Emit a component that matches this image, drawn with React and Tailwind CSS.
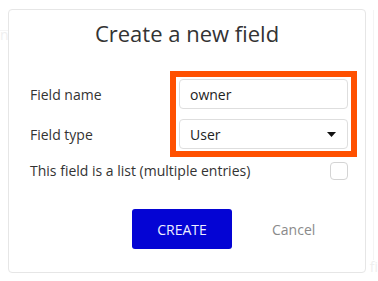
export default function App() {
  return (
    <div
      className="relative h-[281px] w-[378px] overflow-hidden bg-white"
      style={{ fontFamily: '"Open Sans", "Noto Sans", sans-serif' }}
    >
      {/* faint page content behind the dialog */}
      <div className="absolute left-0 top-[24px] text-[14px] text-[#efefef]">n</div>
      <div className="absolute left-0 top-[30px] h-px w-[60px] bg-[#f6f6f6]" />
      <div className="absolute right-[4px] top-[10px] h-[250px] w-px bg-[#f4f4f4]" />
      <div className="absolute right-0 top-[256px] text-[14px] text-[#efefef]">fi</div>

      <div className="relative ml-[8px] mt-[9px] h-[264px] w-[358px] rounded-[4px] border border-[#e6e6e6] bg-white px-[8px] pt-[8px]">
        <h2 className="text-center text-[22px] leading-[30px] text-[#333]">Create a new field</h2>

        <div className="ml-[13px] mt-[23px] flex">
          <div className="flex w-[140px] flex-col gap-[10px] pt-[8px] text-[14px] text-[#333]">
            <div className="flex h-[30px] items-center">Field name</div>
            <div className="flex h-[30px] items-center">Field type</div>
          </div>
          <div className="flex w-[187px] flex-col gap-[10px] border-[6px] border-[#ff5000] px-[3px] py-[2px]">
            <div className="flex h-[30px] items-center rounded-[4px] border border-[#dedede] px-[10px] text-[14px] text-[#222]">
              owner
            </div>
            <div className="flex h-[30px] items-center justify-between rounded-[4px] border border-[#dedede] pl-[10px] pr-[11px] text-[14px] text-[#222]">
              <span>User</span>
              <svg width="9" height="5" viewBox="0 0 9 5">
                <path d="M0 0h9L4.5 5z" fill="#111" />
              </svg>
            </div>
          </div>
        </div>

        <div className="ml-[13px] mt-[3px] flex w-[318px] items-center justify-between text-[14px] text-[#333]">
          <span>This field is a list (multiple entries)</span>
          <div className="h-[18px] w-[18px] rounded-[4px] border border-[#d4d4d4]" />
        </div>

        <div className="ml-[115px] mt-[28px] flex items-center">
          <button className="h-[40px] w-[100px] rounded-[3px] bg-[#0404d4] text-[14px] text-[#eef]">
            CREATE
          </button>
          <button className="ml-[40px] text-[14px] text-[#8a8a8a]">Cancel</button>
        </div>
      </div>
    </div>
  );
}
